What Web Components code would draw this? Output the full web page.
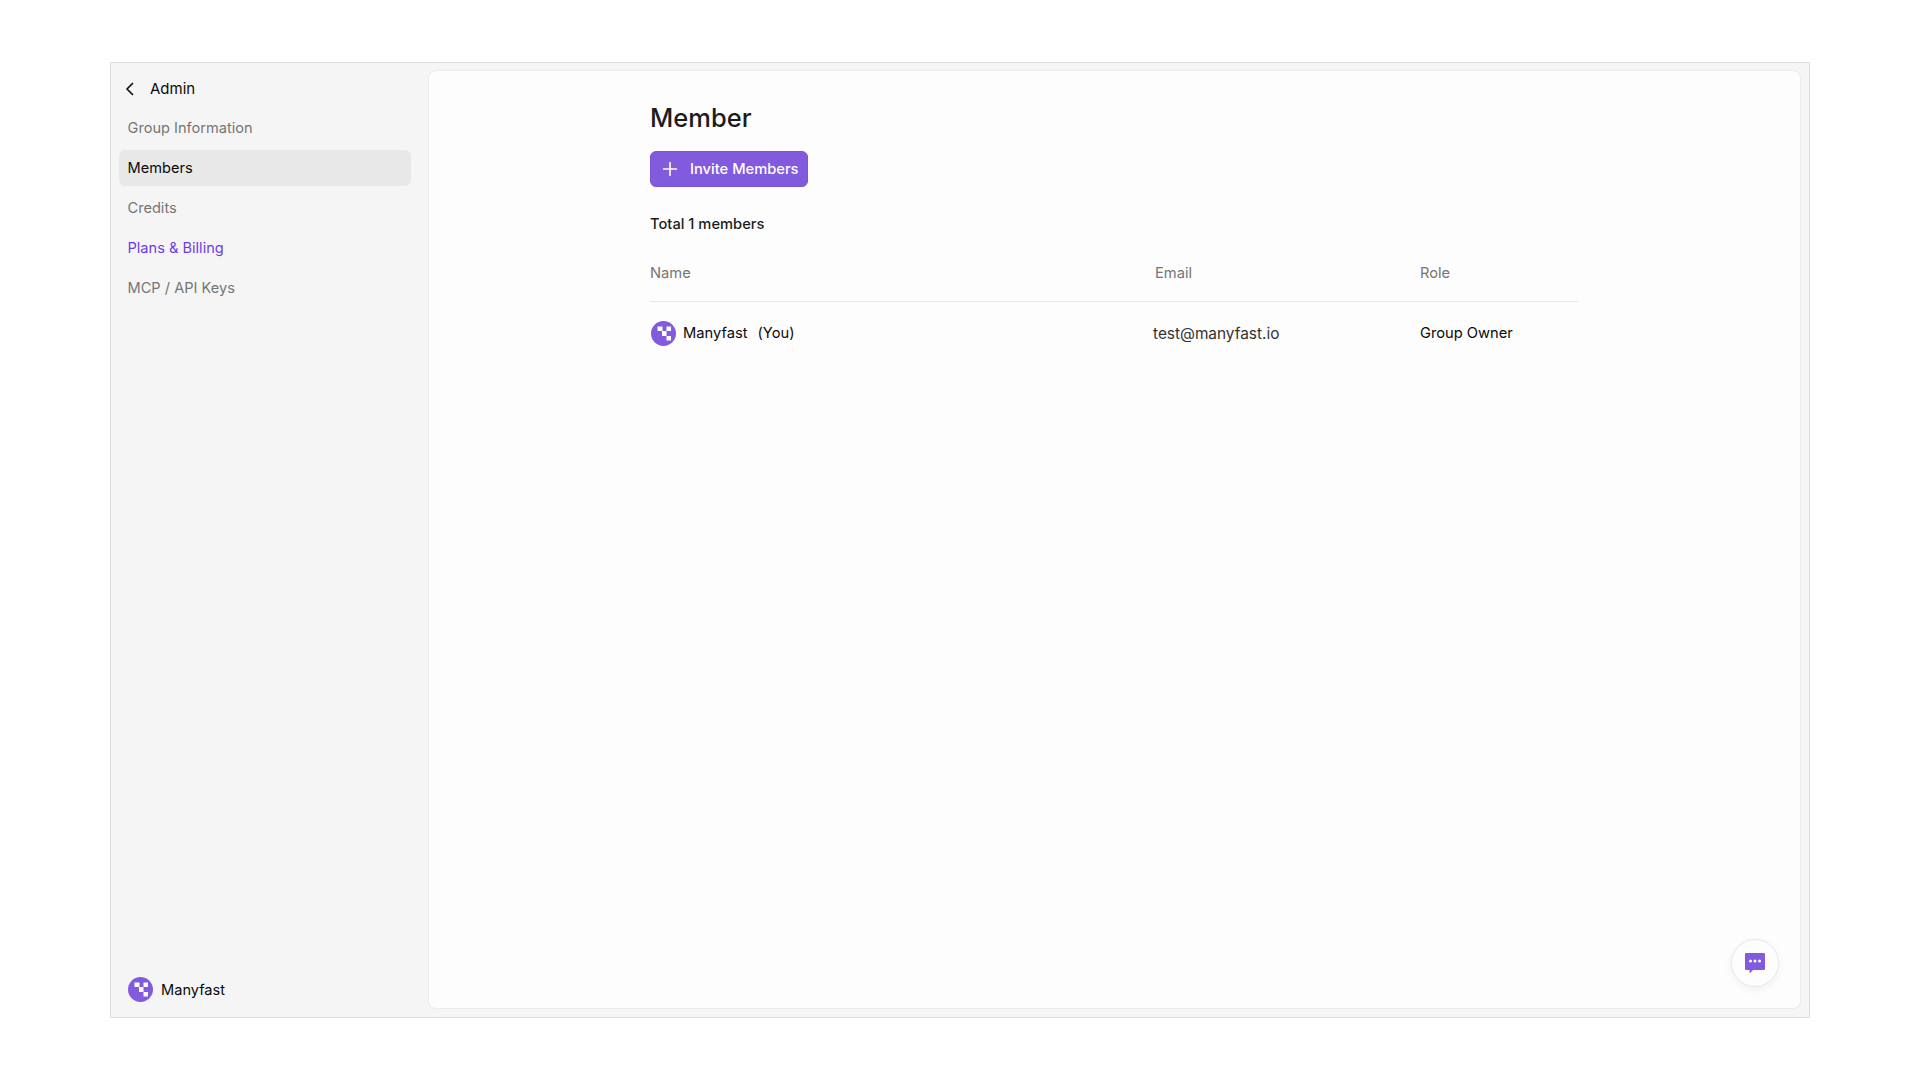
<!DOCTYPE html>
<html lang="en">
<head>
<meta charset="utf-8">
<title>Member</title>
<style>
  html, body { margin: 0; height: 100%; background: #fff; }
  body { font-family: Inter, "Liberation Sans", sans-serif; }
</style>
</head>
<body>
<app-shell>
  <side-nav slot="side"></side-nav>
  <member-page slot="main"></member-page>
</app-shell>
<script>
const LOGO = /* html */`
  <svg viewBox="0 0 25 25" width="25" height="25" aria-hidden="true">
    <circle cx="12.5" cy="12.5" r="12.5" fill="#825ade"/>
    <path fill="#fff" d="M6.500 5.500h5v4.500h-5zM15.500 5.500h4.500v4.500h-4.500zM11 10h4.500v5H11zM15.500 15H20v4.500h-4.500z"/>
  </svg>`;

class AppShell extends HTMLElement {
  constructor() {
    super();
    this.attachShadow({ mode: "open" });
    this.shadowRoot.innerHTML = /* html */`
    <style>
      :host {
        display: flex;
        box-sizing: border-box;
        height: 1080px;
        padding: 62px 110px;
      }
      .frame {
        flex: 1;
        display: flex;
        position: relative;
        background: #f5f5f5;
        border: 1px solid #dedede;
      }
      .side { display: flex; width: 317px; flex: none; }
      .main {
        flex: 1;
        display: flex;
        margin: 7px 8px 8px 0;
        background: #fdfdfd;
        border: 1px solid #ebebeb;
        border-radius: 8px;
      }
    </style>
    <div class="frame">
      <div class="side"><slot name="side"></slot></div>
      <div class="main"><slot name="main"></slot></div>
      <chat-fab></chat-fab>
    </div>`;
  }
}

class SideNav extends HTMLElement {
  constructor() {
    super();
    this.attachShadow({ mode: "open" });
    this.shadowRoot.innerHTML = /* html */`
    <style>
      :host {
        flex: 1;
        display: flex;
        flex-direction: column;
        box-sizing: border-box;
        padding: 6px 17px 0 8px;
        font-size: 14.6px;
        color: #757575;
      }
      .back {
        display: flex;
        align-items: center;
        height: 39px;
        margin-bottom: 2px;
        padding-left: 1px;
        font-size: 15px;
        color: #0a0a0a;
      }
      .back svg { margin-right: 10px; }
      a {
        display: flex;
        align-items: center;
        height: 36px;
        margin-bottom: 4px;
        padding-left: 8.5px;
        border-radius: 6px;
      }
      a.active { background: #e8e8e8; color: #0a0a0a; }
      a.accent { color: #6d3bea; }
      .foot {
        margin-top: auto;
        display: flex;
        align-items: center;
        gap: 8px;
        height: 25px;
        padding: 0 0 15px 9px;
        color: #0a0a0a;
      }
    </style>
    <div class="back">
      <svg viewBox="0 0 20 20" width="20" height="20" fill="none" stroke="#111" stroke-width="1.7" stroke-linecap="round" stroke-linejoin="round"><path d="M12.5 4.500 7 10l5.500 5.500"/></svg>
      <span>Admin</span>
    </div>
    <a>Group Information</a>
    <a class="active">Members</a>
    <a>Credits</a>
    <a class="accent">Plans &amp; Billing</a>
    <a>MCP / API Keys</a>
    <div class="foot">${LOGO}<span>Manyfast</span></div>`;
  }
}

class MemberPage extends HTMLElement {
  constructor() {
    super();
    this.attachShadow({ mode: "open" });
    this.shadowRoot.innerHTML = /* html */`
    <style>
      :host {
        flex: 1;
        display: block;
        padding: 29px 0 0 221px;
        font-size: 14.7px;
        color: #0a0a0a;
      }
      h1 {
        margin: 0 0 15px;
        font-size: 25.5px;
        line-height: 36px;
        font-weight: 500;
        color: #1c1c1c;
      }
      button {
        display: flex;
        align-items: center;
        height: 36px;
        width: 158px;
        padding: 0 0 0 10px;
        border: 1px solid #7c54d8;
        border-radius: 6px;
        background: #825ade;
        color: #fff;
        font: 500 14.7px Inter, "Liberation Sans", sans-serif;
      }
      button svg { margin-right: 11px; }
      .total { margin: 27px 0 0; line-height: 20px; font-weight: 500; color: #1c1c1c; }
      member-table { margin-top: 19px; }
    </style>
    <h1>Member</h1>
    <button type="button">
      <svg viewBox="0 0 18 18" width="18" height="18" fill="none" stroke="#fff" stroke-width="1.6" stroke-linecap="round"><path d="M9 2.500v13M2.500 9h13"/></svg>
      Invite Members
    </button>
    <p class="total">Total 1 members</p>
    <member-table></member-table>`;
  }
}

class MemberTable extends HTMLElement {
  constructor() {
    super();
    this.attachShadow({ mode: "open" });
    this.shadowRoot.innerHTML = /* html */`
    <style>
      :host {
        display: grid;
        grid-template-columns: 503px 267px 159px;
        width: 929px;
      }
      .th {
        height: 49px;
        padding-top: 10px;
        box-sizing: border-box;
        line-height: 20px;
        color: #757575;
        font-weight: 400;
        border-bottom: 1px solid #e8e8e8;
      }
      .th.email { padding-left: 2px; }
      .td {
        display: flex;
        align-items: center;
        height: 62px;
      }
      .who svg { margin: 0 7px 0 1px; }
      .you { margin-left: 10px; }
      .mail { color: #333; font-size: 15.4px; }
    </style>
    <div class="th">Name</div>
    <div class="th email">Email</div>
    <div class="th">Role</div>
    <div class="td who">${LOGO}<span>Manyfast</span><span class="you">(You)</span></div>
    <div class="td mail">test@manyfast.io</div>
    <div class="td">Group Owner</div>`;
  }
}

class ChatFab extends HTMLElement {
  constructor() {
    super();
    this.attachShadow({ mode: "open" });
    this.shadowRoot.innerHTML = /* html */`
    <style>
      :host {
        position: absolute;
        right: 30px;
        bottom: 30px;
        display: flex;
        align-items: center;
        justify-content: center;
        width: 48px;
        height: 48px;
        box-sizing: border-box;
        border: 1px solid #e8e8e8;
        border-radius: 50%;
        background: #fdfdfd;
        box-shadow: 0 3px 8px rgba(0, 0, 0, .05);
      }
    </style>
    <svg viewBox="0 0 22 22" width="22" height="22" aria-hidden="true">
      <path fill="#825ade" d="M2 1h18a1 1 0 0 1 1 1v15a1 1 0 0 1-1 1H9l-3.500 3.500V18H2a1 1 0 0 1-1-1V2a1 1 0 0 1 1-1z"/>
      <circle cx="6.500" cy="9" r="1.500" fill="#fff"/><circle cx="11" cy="9" r="1.500" fill="#fff"/><circle cx="15.500" cy="9" r="1.500" fill="#fff"/>
    </svg>`;
  }
}

customElements.define("app-shell", AppShell);
customElements.define("side-nav", SideNav);
customElements.define("member-page", MemberPage);
customElements.define("member-table", MemberTable);
customElements.define("chat-fab", ChatFab);
</script>
</body>
</html>
